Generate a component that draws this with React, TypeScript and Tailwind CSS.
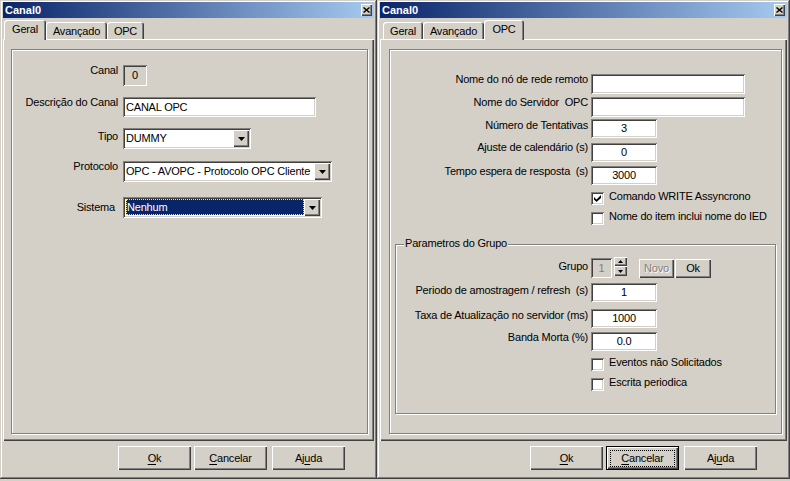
import type { ReactNode } from "react";

const sunken =
  "shadow-[inset_1px_1px_0_#808080,inset_-1px_-1px_0_#ffffff,inset_2px_2px_0_#404040,inset_-2px_-2px_0_#d4d0c8]";
const raised = "shadow-[inset_1px_1px_0_#ffffff,inset_-1px_-1px_0_#404040,inset_-2px_-2px_0_#808080]";
const frame =
  "shadow-[inset_-1px_-1px_0_#404040,inset_1px_1px_0_#d4d0c8,inset_-2px_-2px_0_#808080,inset_2px_2px_0_#ffffff]";
const etched = "border border-[#808080] shadow-[inset_1px_1px_0_#ffffff,1px_1px_0_#ffffff]";

function TitleBar() {
  return (
    <div className="flex h-[16px] shrink-0 items-center justify-between bg-[linear-gradient(to_right,#0a246a,#a6caf0)] px-[2px]">
      <span className="font-bold tracking-normal text-white">Canal0</span>
      <div className={`flex h-[12px] w-[11px] items-center justify-center bg-[#d4d0c8] ${raised}`}>
        <svg width="7" height="6" viewBox="0 0 7 6">
          <path d="M0.5 0.5L6.5 5.5M6.5 0.5L0.5 5.5" stroke="#000" strokeWidth="1.4" />
        </svg>
      </div>
    </div>
  );
}

function Tab({ label, active, cls }: { label: string; active?: boolean; cls: string }) {
  return (
    <div
      className={`${cls} flex shrink-0 justify-center rounded-t-[3px] bg-[#d4d0c8] pt-[3px] shadow-[inset_1px_1px_0_#ffffff,inset_-1px_0_0_#404040,inset_-2px_0_0_#808080] ${
        active ? "relative z-10 -mb-px h-[20px]" : "h-[17px]"
      }`}
    >
      {label}
    </div>
  );
}

function Btn({ children, def }: { children: ReactNode; def?: boolean }) {
  if (def) {
    return (
      <div className="h-[24px] w-[73px] border border-black">
        <div className={`flex h-full w-full items-center justify-center bg-[#d4d0c8] ${raised}`}>
          <span className="flex h-[17px] w-[65px] items-center justify-center border border-dotted border-black">
            {children}
          </span>
        </div>
      </div>
    );
  }
  return (
    <div className={`flex h-[24px] w-[73px] items-center justify-center bg-[#d4d0c8] ${raised}`}>{children}</div>
  );
}

function Buttons({ pr, def }: { pr: string; def?: boolean }) {
  return (
    <div className={`mt-[5px] flex justify-end ${pr}`}>
      <Btn>
        <span className="underline underline-offset-[2px]">O</span>k
      </Btn>
      <div className="ml-[3px]">
        <Btn def={def}>
          <span className="underline underline-offset-[2px]">C</span>ancelar
        </Btn>
      </div>
      <div className="ml-[5px]">
        <Btn>
          Aj<span className="underline underline-offset-[2px]">u</span>da
        </Btn>
      </div>
    </div>
  );
}

function Row({
  mt,
  lw,
  lo = "",
  label,
  children,
}: {
  mt: string;
  lw: string;
  lo?: string;
  label: string;
  children: ReactNode;
}) {
  return (
    <div className={`flex items-start ${mt}`}>
      <div className={`${lw} shrink-0 whitespace-pre text-right ${lo}`}>{label}</div>
      {children}
    </div>
  );
}

function Field({
  cls,
  value = "",
  center,
  bg = "bg-white",
}: {
  cls: string;
  value?: string;
  center?: boolean;
  bg?: string;
}) {
  return (
    <div
      className={`flex shrink-0 items-center whitespace-nowrap px-[3px] ${cls} ${bg} ${
        center ? "justify-center" : ""
      } ${sunken}`}
    >
      {value}
    </div>
  );
}

function DropBtn() {
  return (
    <div className={`flex h-[17px] w-[16px] shrink-0 items-center justify-center bg-[#d4d0c8] ${raised}`}>
      <svg width="7" height="4" viewBox="0 0 7 4">
        <path d="M0 0H7L3.5 4Z" fill="#000" />
      </svg>
    </div>
  );
}

function Combo({ w, value, focused }: { w: string; value: string; focused?: boolean }) {
  return (
    <div className={`ml-[5px] flex h-[21px] shrink-0 bg-white p-[2px] ${w} ${sunken}`}>
      {focused ? (
        <div className="mb-px ml-px flex flex-1 items-center border border-dotted border-[#f5db95] bg-[#0a246a] text-white">
          {value}
        </div>
      ) : (
        <div className="flex min-w-0 flex-1 items-center overflow-hidden whitespace-nowrap pl-px">{value}</div>
      )}
      <DropBtn />
    </div>
  );
}

function Check({ checked }: { checked?: boolean }) {
  return (
    <div className={`flex h-[13px] w-[13px] shrink-0 items-center justify-center bg-white ${sunken}`}>
      {checked && (
        <svg width="7" height="7" viewBox="0 0 7 7">
          <path d="M0 2L2.5 4.5L7 0V3L2.5 7L0 4.5Z" fill="#000" />
        </svg>
      )}
    </div>
  );
}

function CheckRow({ mt, indent, label, checked }: { mt: string; indent: string; label: string; checked?: boolean }) {
  return (
    <div className={`flex items-start ${mt}`}>
      <div className={`${indent} shrink-0`} />
      <Check checked={checked} />
      <span className="-mt-[2px] ml-[5px]">{label}</span>
    </div>
  );
}

function Spin() {
  return (
    <div className="-mt-px ml-[2px] flex w-[13px] shrink-0 flex-col">
      <div className={`flex h-[9px] items-center justify-center bg-[#d4d0c8] ${raised}`}>
        <svg width="5" height="3" viewBox="0 0 5 3">
          <path d="M2.5 0L5 3H0Z" fill="#000" />
        </svg>
      </div>
      <div className={`flex h-[10px] items-center justify-center bg-[#d4d0c8] ${raised}`}>
        <svg width="5" height="3" viewBox="0 0 5 3">
          <path d="M0 0H5L2.5 3Z" fill="#000" />
        </svg>
      </div>
    </div>
  );
}

function LeftWindow() {
  const lw = "w-[106px]";
  return (
    <div className={`flex h-[479px] w-[377px] shrink-0 flex-col bg-[#d4d0c8] px-[3px] pt-[2px] ${frame}`}>
      <TitleBar />
      <div className="flex h-[21px] shrink-0 items-end">
        <Tab label="Geral" active cls="ml-px w-[42px]" />
        <Tab label="Avançado" cls="w-[61px]" />
        <Tab label="OPC" cls="w-[37px]" />
      </div>
      <div className={`h-[402px] shrink-0 bg-[#d4d0c8] pt-[10px] ${raised}`}>
        <div className={`ml-[8px] h-[385px] w-[357px] ${etched}`}>
          <Row mt="mt-[15px]" lw={lw} lo="-mt-px" label="Canal">
            <Field cls="ml-[5px] h-[21px] w-[24px]" bg="bg-[#d4d0c8]" value="0" center />
          </Row>
          <Row mt="mt-[11px]" lw={lw} lo="-mt-px" label="Descrição do Canal">
            <Field cls="ml-[5px] h-[20px] w-[193px]" value="CANAL OPC" />
          </Row>
          <Row mt="mt-[11px]" lw={lw} lo="mt-[2px]" label="Tipo">
            <Combo w="w-[128px]" value="DUMMY" />
          </Row>
          <Row mt="mt-[12px]" lw={lw} lo="-mt-px" label="Protocolo">
            <Combo w="w-[209px]" value="OPC - AVOPC - Protocolo OPC Cliente" />
          </Row>
          <Row mt="mt-[15px]" lw={lw} lo="mt-[4px] pr-[3px]" label="Sistema">
            <Combo w="w-[199px]" value="Nenhum" focused />
          </Row>
        </div>
      </div>
      <Buttons pr="pr-[29px]" />
    </div>
  );
}

function RightWindow() {
  const lw = "w-[198px]";
  const gw = "w-[192px]";
  return (
    <div className={`flex h-[479px] w-[413px] shrink-0 flex-col bg-[#d4d0c8] px-[3px] pt-[2px] ${frame}`}>
      <TitleBar />
      <div className="flex h-[21px] shrink-0 items-end">
        <Tab label="Geral" cls="ml-[3px] w-[40px]" />
        <Tab label="Avançado" cls="w-[61px]" />
        <Tab label="OPC" active cls="w-[40px]" />
      </div>
      <div className={`h-[402px] shrink-0 bg-[#d4d0c8] pt-[10px] ${raised}`}>
        <div className={`ml-[9px] h-[385px] w-[393px] ${etched}`}>
          <Row mt="mt-[24px]" lw={lw} lo="-mt-px" label="Nome do nó de rede remoto">
            <Field cls="ml-[3px] h-[20px] w-[154px]" />
          </Row>
          <Row mt="mt-[3px]" lw={lw} lo="-mt-px" label="Nome do Servidor  OPC">
            <Field cls="ml-[3px] h-[20px] w-[154px]" />
          </Row>
          <Row mt="mt-[2px]" lw={lw} label="Número de Tentativas">
            <Field cls="ml-[3px] h-[19px] w-[66px]" value="3" center />
          </Row>
          <Row mt="mt-[5px]" lw={lw} lo="-mt-[2px]" label="Ajuste de calendário (s)">
            <Field cls="ml-[3px] h-[19px] w-[66px]" value="0" center />
          </Row>
          <Row mt="mt-[4px]" lw={lw} lo="-mt-px" label="Tempo espera de resposta  (s)">
            <Field cls="ml-[3px] h-[19px] w-[66px]" value="3000" center />
          </Row>
          <CheckRow mt="mt-[7px]" indent="w-[201px]" label="Comando WRITE Assyncrono" checked />
          <CheckRow mt="mt-[7px]" indent="w-[201px]" label="Nome do item inclui nome do IED" />

          <div className={`relative ml-[5px] mt-[19px] h-[170px] w-[381px] ${etched}`}>
            <span className="absolute left-[8px] top-[-8px] bg-[#d4d0c8] px-px">Parametros do Grupo</span>
            <Row mt="mt-[13px]" lw={gw} lo="mt-[2px]" label="Grupo">
              <Field
                cls="ml-[3px] h-[20px] w-[21px] text-[#808080]"
                bg="bg-[#d4d0c8]"
                value="1"
                center
              />
              <Spin />
              <div
                className={`ml-[12px] mt-px flex h-[19px] w-[35px] shrink-0 items-center justify-center bg-[#d4d0c8] text-[#808080] [text-shadow:1px_1px_0_#ffffff] ${raised}`}
              >
                Novo
              </div>
              <div
                className={`ml-px mt-px flex h-[19px] w-[36px] shrink-0 items-center justify-center bg-[#d4d0c8] ${raised}`}
              >
                Ok
              </div>
            </Row>
            <Row mt="mt-[5px]" lw={gw} lo="mt-px" label="Periodo de amostragem / refresh  (s)">
              <Field cls="ml-[3px] h-[19px] w-[66px]" value="1" center />
            </Row>
            <Row mt="mt-[7px]" lw={gw} label="Taxa de Atualização no servidor (ms)">
              <Field cls="ml-[3px] h-[19px] w-[66px]" value="1000" center />
            </Row>
            <Row mt="mt-[4px]" lw={gw} lo="-mt-px" label="Banda Morta (%)">
              <Field cls="ml-[3px] h-[19px] w-[66px]" value="0.0" center />
            </Row>
            <CheckRow mt="mt-[7px]" indent="w-[195px]" label="Eventos não Solicitados" />
            <CheckRow mt="mt-[7px]" indent="w-[195px]" label="Escrita periodica" />
          </div>
        </div>
      </div>
      <Buttons pr="pr-[30px]" def />
    </div>
  );
}

export default function App() {
  return (
    <div className="flex h-[481px] w-[790px] bg-[#d4d0c8] font-['Liberation_Sans',Arial,sans-serif] text-[11px] leading-[13px] tracking-[-0.2px] text-black">
      <LeftWindow />
      <RightWindow />
    </div>
  );
}
